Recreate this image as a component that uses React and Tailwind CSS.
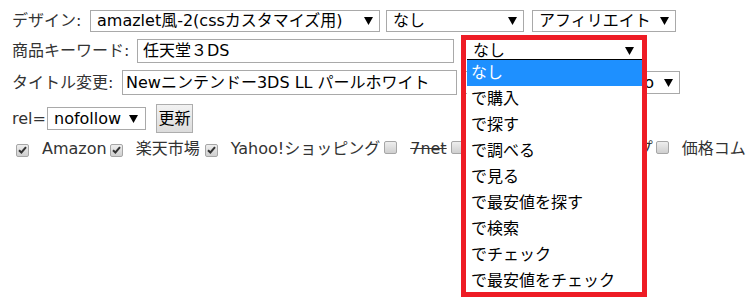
import React from "react";

const Arrow = () => (
  <svg width="9" height="8" viewBox="0 0 9 8" className="shrink-0">
    <polygon points="0,0 9,0 4.5,8" fill="#000" />
  </svg>
);

const Select = ({ children, className = "", justify = "justify-between" }) => (
  <div
    className={`flex items-center ${justify} border border-[#a9a9a9] bg-white text-black pl-[6px] pr-[6px] h-[22px] leading-[20px] whitespace-nowrap overflow-hidden ${className}`}
  >
    {children}
  </div>
);

const CheckBox = ({ checked }) => (
  <span className="inline-flex items-center justify-center w-[13px] h-[13px] shrink-0 rounded-[2px] border border-[#a6a6a6] bg-gradient-to-b from-[#eeeeee] to-[#cfcfcf]">
    {checked && (
      <svg width="9" height="8" viewBox="0 0 9 8">
        <path d="M1 4.2 L3.4 6.5 L8 1.2" stroke="#333" strokeWidth="2" fill="none" />
      </svg>
    )}
  </span>
);

const options = [
  "なし",
  "で購入",
  "で探す",
  "で調べる",
  "で見る",
  "で最安値を探す",
  "で検索",
  "でチェック",
  "で最安値をチェック",
];

export default function App() {
  return (
    <div className="relative w-[756px] h-[308px] overflow-hidden bg-white pl-[12px] pt-[10px] text-[16px] text-[#333] font-['DejaVu_Sans','Noto_Sans_CJK_JP',sans-serif]">
      {/* Row 1 */}
      <div className="flex items-center h-[22px]">
        <span className="w-[78px] whitespace-nowrap">デザイン:</span>
        <Select className="w-[290px]">
          <span>amazlet風-2(cssカスタマイズ用)</span>
          <Arrow />
        </Select>
        <Select className="w-[138px] ml-[6px]">
          <span>なし</span>
          <Arrow />
        </Select>
        <Select className="w-[144px] ml-[8px]">
          <span>アフィリエイト</span>
          <Arrow />
        </Select>
      </div>

      {/* Row 2 */}
      <div className="flex items-center h-[24px] mt-[7px]">
        <span className="w-[125px] whitespace-nowrap">商品キーワード:</span>
        <div className="w-[317px] h-[24px] border border-[#a9a9a9] bg-white text-black pl-[5px] leading-[22px] whitespace-nowrap">
          任天堂３DS
        </div>
        <div className="relative ml-[13px] w-[175px]">
          <Select className="w-[175px] border-0 pl-[3px] pr-[8px]">
            <span>なし</span>
            <Arrow />
          </Select>
          {/* dropdown list */}
          <div className="absolute left-0 top-[19px] w-[175px] bg-white border-t border-black z-10">
            {options.map((o, i) => (
              <div
                key={o}
                className={`h-[26px] leading-[26px] pl-[4px] whitespace-nowrap ${
                  i === 0 ? "bg-[#1e90ff] text-white" : "text-black"
                }`}
              >
                {o}
              </div>
            ))}
          </div>
          {/* red annotation frame */}
          <div className="absolute left-[-6px] top-[-5px] w-[186px] h-[262px] border-[5px] border-[#ee1c25] z-20 pointer-events-none" />
        </div>
      </div>

      {/* Row 3 */}
      <div className="flex items-center h-[25px] mt-[7px]">
        <span className="w-[110px] whitespace-nowrap">タイトル変更:</span>
        <div className="w-[335px] h-[25px] border border-[#a9a9a9] bg-white text-black pl-[3px] leading-[23px] whitespace-nowrap overflow-hidden">
          Newニンテンドー3DS LL パールホワイト
        </div>
        <Select className="w-[215px] ml-[8px] h-[23px]" justify="justify-end">
          <span className="mr-[10px]">Yahoo</span>
          <Arrow />
        </Select>
      </div>

      {/* Row 4 */}
      <div className="flex items-center h-[29px] mt-[9px]">
        <span className="w-[35px] whitespace-nowrap">rel=</span>
        <Select className="w-[99px] h-[23px] pl-[4px] pr-[7px]">
          <span>nofollow</span>
          <Arrow />
        </Select>
        <div className="ml-[10px] w-[37px] h-[29px] flex items-center justify-center border border-[#adadad] bg-gradient-to-b from-[#f2f2f2] to-[#dcdcdc] text-black">
          更新
        </div>
      </div>

      {/* Row 5 */}
      <div className="flex items-center h-[20px] mt-[6px] whitespace-nowrap">
        <span className="ml-[4px]"><CheckBox checked /></span>
        <span className="ml-[13px]">Amazon</span>
        <span className="ml-[3px]"><CheckBox checked /></span>
        <span className="ml-[13px]">楽天市場</span>
        <span className="ml-[5px]"><CheckBox checked /></span>
        <span className="ml-[13px]">Yahoo!ショッピング</span>
        <span className="ml-[4px]"><CheckBox /></span>
        <span className="ml-[13px] line-through">7net</span>
        <span className="ml-[4px]"><CheckBox /></span>
        <span className="ml-[13px]">ビックカメラ・ショップ</span>
        <span className="ml-[3px]"><CheckBox /></span>
        <span className="ml-[13px]">価格コム</span>
      </div>
    </div>
  );
}
